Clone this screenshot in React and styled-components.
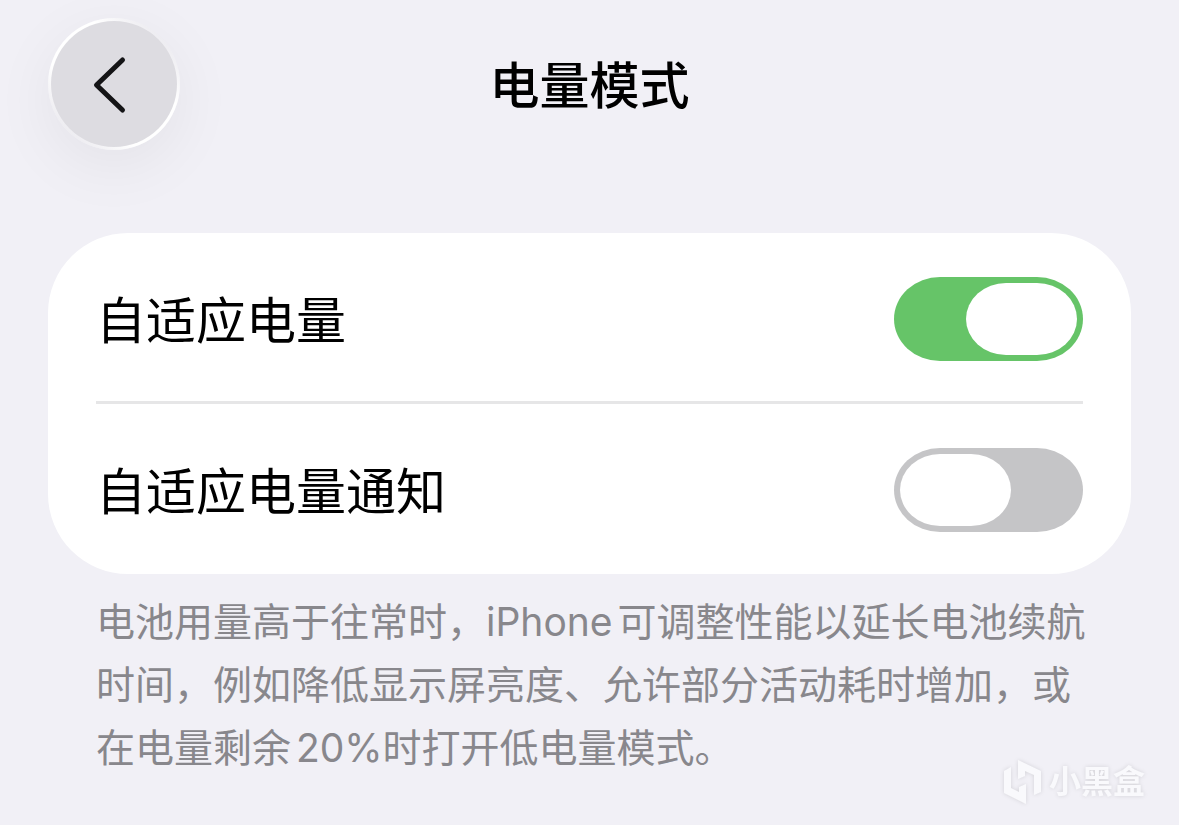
import React, { useState } from 'react';
import styled, { createGlobalStyle } from 'styled-components';

export default function App() {
  const [adaptive, setAdaptive] = useState(true);
  const [notify, setNotify] = useState(false);

  return (
    <Screen>
      <GlobalStyle />

      <Header>
        <BackButton type="button" aria-label="返回">
          <svg width="40" height="64" viewBox="0 0 40 64" fill="none" aria-hidden="true">
            <path d="M32.500 8L6.500 33L32.500 58" stroke="#141416" strokeWidth="5" strokeLinecap="round" strokeLinejoin="round" />
          </svg>
        </BackButton>
        <Title>电量模式</Title>
      </Header>

      <Card>
        <Row>
          <Label htmlFor="adaptive">自适应电量</Label>
          <Switch id="adaptive" checked={adaptive} onChange={e => setAdaptive(e.target.checked)} />
        </Row>
        <Row>
          <Label htmlFor="notify">自适应电量通知</Label>
          <Switch id="notify" checked={notify} onChange={e => setNotify(e.target.checked)} />
        </Row>
      </Card>

      <Footnote>
        电池用量高于往常时，iPhone可调整性能以延长电池续航时间，例如降低显示屏亮度、允许部分活动耗时增加，或在电量剩余20%时打开低电量模式。
      </Footnote>

      <Watermark>
        <svg width="40" height="46" viewBox="0 0 40 46" fill="currentColor" aria-hidden="true">
          <path d="M1 12L8 8V29L16 33V28L23 25V45L1 34Z" />
          <path d="M15 1L38 12V33L31 36V16L22 12V17L15 20Z" />
        </svg>
        小黑盒
      </Watermark>
    </Screen>
  );
}

const GlobalStyle = createGlobalStyle`
  body {
    margin: 0;
    background: #f1f0f6;
    color: #000;
    font-family: Inter, "Noto Sans CJK SC", sans-serif;
  }
`;

const Screen = styled.main`
  position: relative;
  box-sizing: border-box;
  min-height: 100vh;
  padding: 18px 48px;
`;

const Header = styled.header`
  display: grid;
  grid-template-columns: 132px 1fr 132px;
  align-items: center;
  margin-bottom: 83px;
`;

const BackButton = styled.button`
  display: flex;
  align-items: center;
  justify-content: center;
  width: 132px;
  height: 132px;
  padding: 0 8px 0 0;
  border: 3px solid transparent;
  border-radius: 50%;
  background:
    linear-gradient(#dddce1, #dddce1) padding-box,
    linear-gradient(45deg, #ebeaef 12%, #fff 34%, #fff 66%, #ebeaef 88%) border-box;
  box-shadow: 0 16px 64px rgba(0, 0, 0, 0.06);
  cursor: pointer;
`;

const Title = styled.h1`
  margin: 0;
  padding-top: 4px;
  font-size: 50px;
  font-weight: 500;
  line-height: 64px;
  text-align: center;
`;

const Card = styled.section`
  border-radius: 80px;
  background: #fff;
  padding: 0 48px 2px;
`;

const Row = styled.div`
  display: flex;
  align-items: center;
  justify-content: space-between;
  padding: 44px 0 40px;

  & + & {
    border-top: 3px solid #e6e6e7;
  }
`;

const Label = styled.label`
  padding-top: 4px;
  font-size: 50px;
  line-height: 64px;
`;

const Switch = styled.input.attrs({ type: 'checkbox', role: 'switch' })`
  appearance: none;
  display: flex;
  justify-content: ${p => (p.checked ? 'flex-end' : 'flex-start')};
  box-sizing: border-box;
  flex-shrink: 0;
  width: 189px;
  height: 84px;
  margin: 0;
  padding: 6px;
  border-radius: 46px / 42px;
  background: ${p => (p.checked ? '#66c468' : '#c5c5c7')};
  cursor: pointer;

  &::before {
    content: '';
    width: 111px;
    height: 72px;
    border-radius: 40px / 36px;
    background: #fff;
  }
`;

const Footnote = styled.p`
  margin: 16px 40px 0 48px;
  color: #88878c;
  font-size: 39px;
  line-height: 63px;
  text-autospace: normal;
`;

const Watermark = styled.div`
  position: absolute;
  right: 34px;
  bottom: 20px;
  display: flex;
  align-items: center;
  gap: 6px;
  color: #f9f9fc;
  font-size: 32px;
  font-weight: 700;
  line-height: 46px;
  filter: drop-shadow(0 0 2px rgba(0, 0, 0, 0.12));
`;
